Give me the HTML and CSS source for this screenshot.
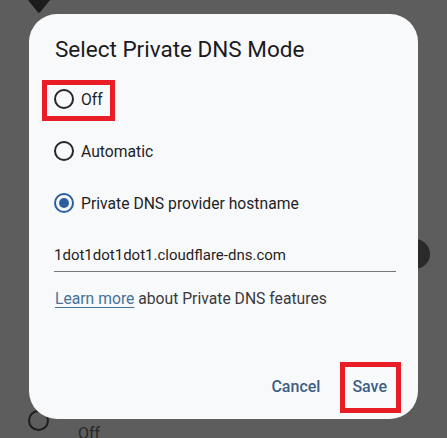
FILE: index.html
```html
<!DOCTYPE html>
<html lang="en">
<head>
<meta charset="utf-8">
<title>Select Private DNS Mode</title>
<link rel="stylesheet" href="styles.css">
</head>
<body>
  <div class="screen">
    <div class="bg-top">
      <svg class="bg-icon" width="22" height="13" viewBox="0 0 22 13"><path d="M0 0 H22 L12.2 12.2 Q11 13.4 9.8 12.2 Z" fill="#1c1c1c"/></svg>
    </div>
    <div class="bg-divider"></div>
    <div class="bg-mid">
      <span class="bg-knob"></span>
    </div>
    <div class="bg-bottom">
      <span class="bg-ring"></span>
      <span class="bg-label">Off</span>
    </div>
  </div>

  <div class="dialog" role="dialog">
    <h1 class="title">Select Private DNS Mode</h1>
    <div class="options">
      <label class="option"><span class="radio"></span><span class="opt-text">Off</span></label>
      <label class="option"><span class="radio"></span><span class="opt-text">Automatic</span></label>
      <label class="option"><span class="radio checked"></span><span class="opt-text">Private DNS provider hostname</span></label>
    </div>
    <div class="field">1dot1dot1dot1.cloudflare-dns.com</div>
    <p class="learn"><a class="link">Learn more</a> about Private DNS features</p>
    <div class="actions">
      <button class="btn">Cancel</button>
      <button class="btn">Save</button>
    </div>
  </div>

  <div class="mark mark-off"></div>
  <div class="mark mark-save"></div>
</body>
</html>
```
FILE: styles.css
```css
* { box-sizing: border-box; }
html, body { margin: 0; padding: 0; }
body {
  width: 447px;
  height: 438px;
  overflow: hidden;
  position: relative;
  background: #5d5d5d;
  font-family: Roboto, "Noto Sans", "Liberation Sans", sans-serif;
}

.screen {
  height: 438px;
  display: flex;
  flex-direction: column;
}
.bg-top { height: 13px; padding-left: 28px; display: flex; }
.bg-icon { display: block; }
.bg-divider { margin-top: 121px; height: 1px; background: #4d4d4d; }
.bg-mid { margin-top: 105px; display: flex; justify-content: flex-end; padding-right: 17px; }
.bg-knob { width: 30px; height: 30px; border-radius: 50%; background: #2a2a2a; }
.bg-bottom { margin-top: 141px; display: flex; align-items: flex-start; padding-left: 28px; }
.bg-ring { width: 21px; height: 21px; border-radius: 50%; border: 2.5px solid #1e1e1e; }
.bg-label { margin-left: 29px; margin-top: 14px; font-size: 16px; line-height: 20px; color: #262626; }

.dialog {
  position: absolute;
  left: 29px;
  top: 14px;
  width: 389px;
  height: 405px;
  border-radius: 28px;
  background: #f8f9fb;
  padding: 21px 19px 13px 25px;
  display: flex;
  flex-direction: column;
}
.title {
  margin: 0;
  padding-left: 1px;
  font-size: 22.5px;
  line-height: 28px;
  font-weight: 400;
  color: #1b1b1d;
}
.options { margin-top: 10px; display: flex; flex-direction: column; }
.option { height: 52px; display: flex; align-items: center; gap: 7px; }
.radio {
  width: 20px; height: 20px;
  border-radius: 50%;
  border: 2px solid #262626;
  display: flex; align-items: center; justify-content: center;
}
.radio.checked { border-color: #2d5e9f; }
.radio.checked::after {
  content: "";
  width: 10px; height: 10px;
  border-radius: 50%;
  background: #2d5e9f;
}
.opt-text { font-size: 15.7px; color: #1f1f1f; }
.field {
  margin-top: 14px;
  margin-right: 3px;
  font-size: 15px;
  line-height: 24px;
  padding-bottom: 4px;
  border-bottom: 1px solid #777;
  color: #1f1f1f;
}
.learn {
  margin: 15px 0 0;
  padding-left: 1px;
  font-size: 15.7px;
  line-height: 24px;
  color: #3a3a3a;
}
.link { color: #45729a; text-decoration: underline; text-underline-offset: 3px; }
.actions { margin-top: auto; display: flex; justify-content: flex-end; gap: 8px; }
.btn {
  height: 40px;
  padding: 0 12px;
  border: none;
  background: transparent;
  font-family: inherit;
  font-size: 16px;
  font-weight: 500;
  color: #3e5e85;
}

.mark { position: absolute; border: 5px solid #e81d25; }
.mark-off { left: 42px; top: 80px; width: 73px; height: 41px; }
.mark-save { left: 340px; top: 362px; width: 61px; height: 51px; }
```
